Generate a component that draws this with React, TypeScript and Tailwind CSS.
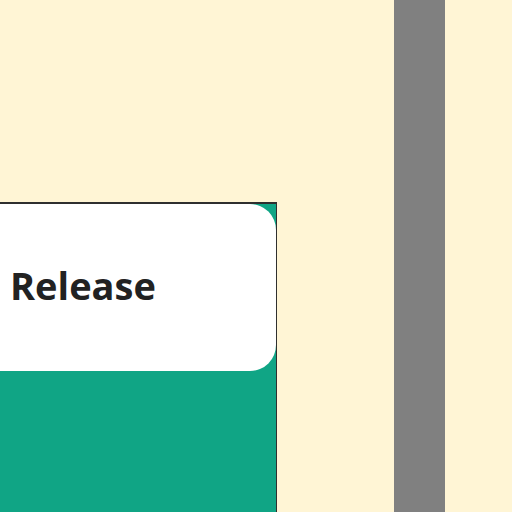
export default function App() {
  return (
    <div className="flex h-[512px] w-[512px] overflow-hidden bg-[#fff5d5]">
      <div className="flex w-[277px] shrink-0 flex-col pt-[202px]">
        <div className="flex-1 border-t-2 border-r border-[#2f2f2f] bg-[#10a585]">
          <div
            className="flex h-[167px] items-center rounded-r-[26px] bg-white pb-[4px] pl-[10px] text-[38px] font-bold text-[#222]"
            style={{ fontFamily: '"Open Sans", "Noto Sans", sans-serif' }}
          >
            Release
          </div>
        </div>
      </div>
      <div className="ml-[117px] w-[51px] shrink-0 bg-[#808080]" />
    </div>
  );
}
